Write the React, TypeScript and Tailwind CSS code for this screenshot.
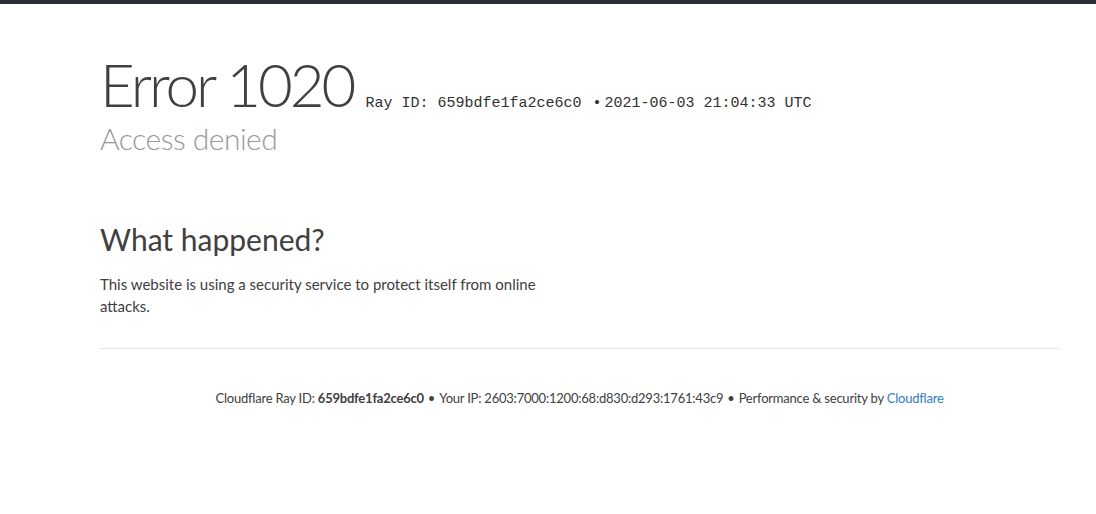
export default function App() {
  return (
    <div className="min-h-screen bg-white text-[#404040]" style={{ fontFamily: 'Lato, "Open Sans", sans-serif' }}>
      <div className="h-1 bg-[#2c2f3a]" />

      <div className="ml-[100px] w-[959px]">
        {/* header */}
        <header className="pt-[50px]">
          <div className="flex items-baseline">
            <h1 className="text-[60px] leading-[60px] font-light tracking-[-3px] text-[#404040]">Error 1020</h1>
            <span className="ml-[12px] text-[15px] text-[#313131]" style={{ fontFamily: '"Liberation Mono", monospace' }}>
              Ray ID: 659bdfe1fa2ce6c0<span className="ml-[11px] mr-[3px]">•</span>2021-06-03 21:04:33 UTC
            </span>
          </div>
          <h2 className="mt-[4px] text-[30px] leading-[36px] font-light tracking-[-0.5px] text-[#999999]">Access denied</h2>
        </header>

        {/* what happened */}
        <section className="mt-[65px] w-[460px]">
          <h2 className="text-[30px] leading-[36px] font-normal text-[#404040]">What happened?</h2>
          <p className="mt-[16px] text-[15px] leading-[22.5px] text-[#404040]">
            This website is using a security service to protect itself from online attacks.
          </p>
        </section>

        <div className="mt-[30px] border-t border-[#e5e5e5]" />

        {/* footer */}
        <footer className="pt-[40px] text-center text-[13px] tracking-[-0.22px] text-[#404040]">
          Cloudflare Ray ID: <strong className="font-bold">659bdfe1fa2ce6c0</strong>
          <span className="mx-[4px]">•</span>
          Your IP: 2603:7000:1200:68:d830:d293:1761:43c9
          <span className="mx-[4px]">•</span>
          Performance &amp; security by <a className="text-[#2f7bbf]">Cloudflare</a>
        </footer>
      </div>
    </div>
  );
}
